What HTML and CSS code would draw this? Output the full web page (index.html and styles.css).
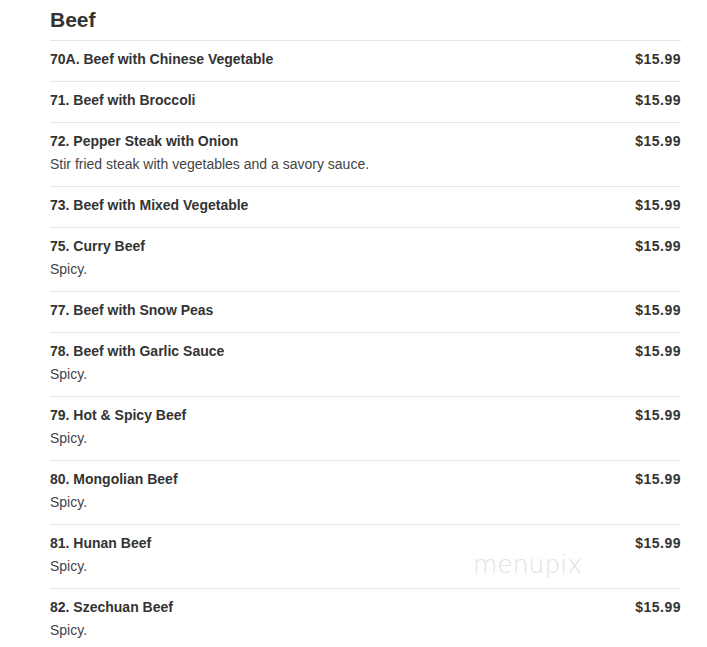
FILE: index.html
```html
<!DOCTYPE html>
<html>
<head>
<meta charset="utf-8">
<link rel="stylesheet" href="styles.css">
</head>
<body>
<div class="menu">
  <h2 class="title">Beef</h2>
  <div class="item"><div class="info"><div class="name">70A. Beef with Chinese Vegetable</div></div><div class="price">$15.99</div></div>
  <div class="item"><div class="info"><div class="name">71. Beef with Broccoli</div></div><div class="price">$15.99</div></div>
  <div class="item"><div class="info"><div class="name">72. Pepper Steak with Onion</div><div class="desc">Stir fried steak with vegetables and a savory sauce.</div></div><div class="price">$15.99</div></div>
  <div class="item"><div class="info"><div class="name">73. Beef with Mixed Vegetable</div></div><div class="price">$15.99</div></div>
  <div class="item"><div class="info"><div class="name">75. Curry Beef</div><div class="desc">Spicy.</div></div><div class="price">$15.99</div></div>
  <div class="item"><div class="info"><div class="name">77. Beef with Snow Peas</div></div><div class="price">$15.99</div></div>
  <div class="item"><div class="info"><div class="name">78. Beef with Garlic Sauce</div><div class="desc">Spicy.</div></div><div class="price">$15.99</div></div>
  <div class="item"><div class="info"><div class="name">79. Hot &amp; Spicy Beef</div><div class="desc">Spicy.</div></div><div class="price">$15.99</div></div>
  <div class="item"><div class="info"><div class="name">80. Mongolian Beef</div><div class="desc">Spicy.</div></div><div class="price">$15.99</div></div>
  <div class="item"><div class="info"><div class="name">81. Hunan Beef</div><div class="desc">Spicy.</div></div><div class="price">$15.99</div></div>
  <div class="item"><div class="info"><div class="name">82. Szechuan Beef</div><div class="desc">Spicy.</div></div><div class="price">$15.99</div></div>
</div>
<div class="watermark">menupix</div>
</body>
</html>
```
FILE: styles.css
```css
html, body {
  margin: 0;
  padding: 0;
  background: #fff;
}
body {
  font-family: "Liberation Sans", Arial, sans-serif;
  color: #333;
  position: relative;
  height: 647px;
  overflow: hidden;
}
.menu {
  margin: 0 26px 0 50px;
  width: 631px;
}
.title {
  margin: 0;
  padding-top: 7px;
  height: 33px;
  font-size: 21px;
  line-height: 26px;
  font-weight: bold;
  color: #333;
}
.item {
  display: flex;
  justify-content: space-between;
  border-top: 1px solid #e5e5e5;
  padding: 8px 0 12px;
}
.name {
  font-size: 14px;
  font-weight: bold;
  line-height: 20px;
}
.desc {
  font-size: 14px;
  line-height: 19px;
  margin-top: 4px;
  color: #444;
}
.price {
  font-size: 14px;
  font-weight: bold;
  line-height: 20px;
  letter-spacing: 0.5px;
}
.watermark {
  position: absolute;
  left: 473px;
  top: 550px;
  font-family: "DejaVu Sans", sans-serif;
  font-weight: 200;
  font-size: 25px;
  color: #e2e2e2;
}
```
